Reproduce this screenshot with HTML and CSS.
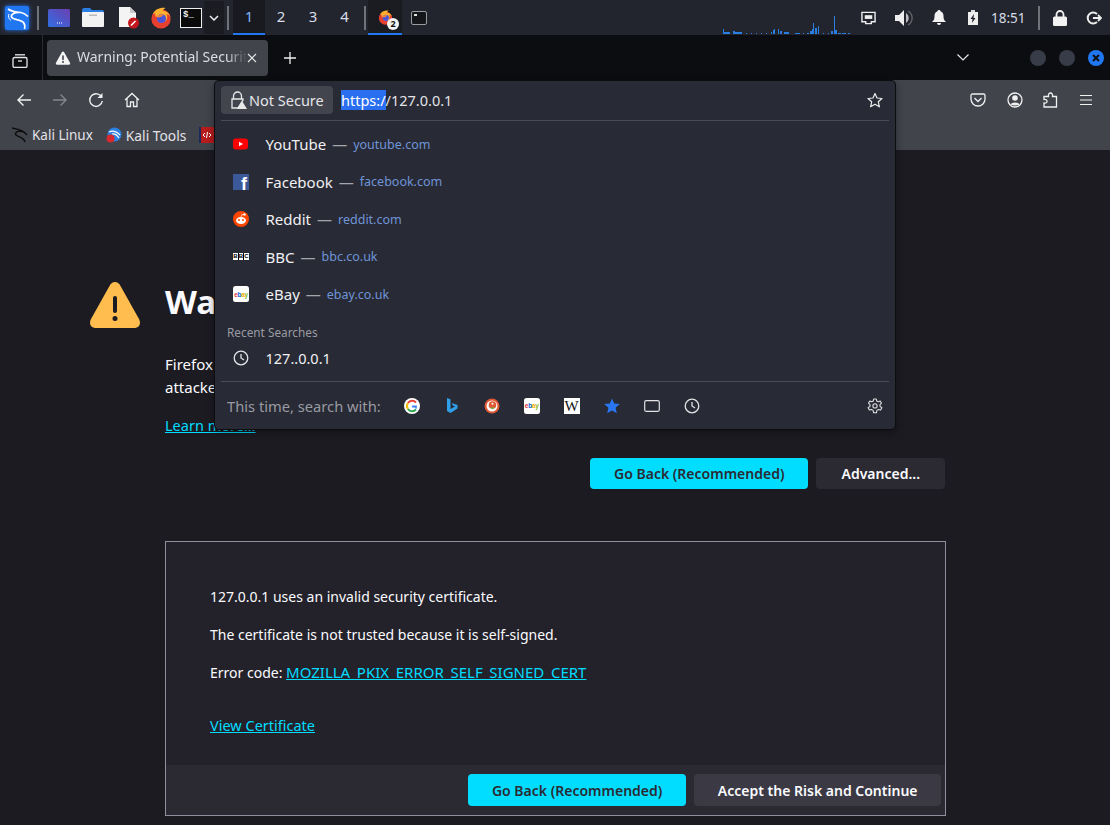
FILE: index.html
```html
<!DOCTYPE html>
<html lang="en">
<head>
  <meta charset="UTF-8" />
  <title>Warning: Potential Security Risk Ahead</title>
  <link rel="stylesheet" href="styles.css">
</head>
<body>
<svg class="sprite" width="0" height="0">
  <symbol id="firefox" viewBox="0 0 24 24">
    <circle cx="12" cy="13" r="10.5" fill="#e8402f"/>
    <path d="M3 8 C5 2 12 0 17 1 C15 2 14 3 14 4 C19 4 23 9 23 14 C23 10 20 8 18 8 C20 12 18 17 13 17 C9 17 7 14 8 11 C6 11 5 9 6 7 C5 7 4 7 3 8Z" fill="#ffb02e"/>
    <circle cx="12.5" cy="12.5" r="5" fill="#4b54d8"/>
    <path d="M7.5 11 C9 8 13 7 16 9 C13 8.5 12 10 13 11 C10 11 9 12 7.5 11Z" fill="#ff8a2b"/>
  </symbol>
  <symbol id="clock" viewBox="0 0 16 16">
    <circle cx="8" cy="8" r="6.8" fill="none" stroke="currentColor" stroke-width="1.3"/>
    <path d="M8 4 V8 L11 10" fill="none" stroke="currentColor" stroke-width="1.3"/>
  </symbol>
  <symbol id="warn" viewBox="0 0 16 16">
    <path d="M8 1.5 C8.6 1.5 9 1.8 9.3 2.4 L15 12.8 C15.5 13.8 15 14.7 13.9 14.7 H2.1 C1 14.7 .5 13.8 1 12.8 L6.7 2.4 C7 1.8 7.4 1.5 8 1.5Z" fill="currentColor"/>
    <rect x="7.2" y="5.2" width="1.6" height="5" rx=".8" fill="#42444c"/>
    <circle cx="8" cy="12.1" r="1" fill="#42444c"/>
  </symbol>
</svg>

<!-- desktop panel -->
<div class="panel">
  <div class="launcher">
    <svg class="kali-btn" viewBox="0 0 24 24" width="24" height="24">
      <rect width="24" height="24" rx="2" fill="#2177f2"/>
      <path d="M3 3 C7 6 12 6 16 6.500 C19 7 21 8.500 23 10.500 M16 6.500 C10 6 5.500 8 6.500 11 C7.500 14 15.500 13 18.500 16.500 C20 18.500 20 21 19.500 23" fill="none" stroke="#fff" stroke-width="1.700"/>
      <path d="M4 8 C3 10 3.500 13 6 14.500" fill="none" stroke="#fff" stroke-width="1"/>
    </svg>
    <span class="sep"></span>
    <svg class="app" viewBox="0 0 22 18" width="22" height="18"><defs><linearGradient id="win" x1="0" x2="1" y1="1" y2="0"><stop offset="0" stop-color="#2f6fe4"/><stop offset="1" stop-color="#6c3fb0"/></linearGradient></defs><rect width="22" height="18" rx="1.500" fill="url(#win)"/><rect x="9" y="13.500" width="1" height="1" fill="#fff"/><rect x="11" y="13.500" width="1" height="1" fill="#fff"/><rect x="13" y="13.500" width="1" height="1" fill="#fff"/></svg>
    <svg class="app" viewBox="0 0 22 19" width="22" height="19"><path d="M0 2 Q0 0 2 0 H8 L10 2 H20 Q22 2 22 4 V8 H0Z" fill="#2c7de0"/><rect y="4" width="22" height="15" rx="1" fill="#f2f2f2"/><rect x="7" y="6.500" width="8" height="1.500" fill="#bbb"/></svg>
    <svg class="app app-doc" viewBox="0 0 22 22" width="22" height="22"><path d="M1 0 H12 L18 6 V20 H1Z" fill="#f4f4f4"/><path d="M12 0 L18 6 H12Z" fill="#c8c8c8"/><circle cx="15.500" cy="16" r="5.500" fill="#c4161c"/><path d="M13 18.500 L17.500 14" stroke="#fff" stroke-width="1.600"/></svg>
    <svg class="app" viewBox="0 0 24 24" width="22" height="22"><use href="#firefox"/></svg>
    <div class="term-app"><span>$_</span></div>
    <div class="chev-app"><svg viewBox="0 0 10 6" width="10" height="6"><path d="M1 1 L5 5 L9 1" fill="none" stroke="#eee" stroke-width="1.500"/></svg></div>
    <span class="sep sep-wide"></span>
  </div>
  <div class="desks">
    <span class="desk on">1</span>
    <span class="desk">2</span>
    <span class="desk">3</span>
    <span class="desk">4</span>
  </div>
  <span class="sep sep-b"></span>
  <div class="task on">
    <svg viewBox="0 0 24 24" width="15" height="15"><use href="#firefox"/></svg>
    <span class="task-badge">2</span>
  </div>
  <div class="task-term"><span></span></div>
  <div class="cpu">
    <svg viewBox="0 0 130 20" width="130" height="20">
      <path d="M0 15 h1 v5 h-1z M1 18 h6 v2 h-6z M10 17 h2 v3 h-2z M12 18 h7 v2 h-7z M23 19 h1 v1 h-1z M28 19 h1 v1 h-1z M33 19 h1 v1 h-1z M38 19 h1 v1 h-1z M43 19 h1 v1 h-1z M48 18 h1 v2 h-1z M50 16 h1 v4 h-1z M51 15 h1 v5 h-1z M55 15 h1 v5 h-1z M57 17 h2 v3 h-2z M61 18 h5 v2 h-5z M72 19 h5 v1 h-5z M80 19 h1 v1 h-1z M84 19 h2 v1 h-2z M87 17 h2 v3 h-2z M89 15 h1 v5 h-1z M90 9 h1 v11 h-1z M92 14 h2 v6 h-2z M95 12 h1 v8 h-1z M100 19 h1 v1 h-1z M105 19 h1 v1 h-1z M108 17 h2 v3 h-2z M111 2 h1 v18 h-1z M112 16 h2 v4 h-2z M115 19 h3 v1 h-3z M119 19 h4 v1 h-4z M125 19 h2 v1 h-2z" fill="#2a7de1"/>
    </svg>
  </div>
  <div class="tray">
    <svg viewBox="0 0 16 14" width="15" height="14"><path d="M1 1 H15 V11 H11 V13 H5 V11 H1Z" fill="none" stroke="#eee" stroke-width="1.500"/><path d="M4 4 H12 V8 H4Z" fill="#eee"/></svg>
    <svg viewBox="0 0 18 16" width="18" height="16"><path d="M0 5 H4 L9 0 V16 L4 11 H0Z" fill="#eee"/><path d="M11 3 A6 6 0 0 1 11 13Z" fill="#bbb"/><path d="M13 1 A8 8 0 0 1 13 15" fill="none" stroke="#666" stroke-width="1.300"/></svg>
    <svg viewBox="0 0 14 15" width="14" height="15"><path d="M7 0 C8 0 8.500 .6 8.500 1.300 C10.500 2 11.500 3.500 11.500 6 C11.500 9 12 10.500 14 12 H0 C2 10.500 2.500 9 2.500 6 C2.500 3.500 3.500 2 5.500 1.300 C5.500 .6 6 0 7 0Z" fill="#f2f2f2"/><path d="M5 13 H9 A2 2 0 0 1 5 13Z" fill="#f2f2f2"/></svg>
    <svg class="battery" viewBox="0 0 10 15" width="10" height="15"><rect x="3" y="0" width="4" height="2" fill="#ddd"/><rect y="2" width="10" height="13" fill="#eee"/><path d="M6 4 L2.500 9 H4.500 L4 13 L7.500 8 H5.500Z" fill="#23252e"/></svg>
    <span class="clock-text">18:51</span>
    <span class="sep"></span>
    <svg viewBox="0 0 14 16" width="14" height="16"><path d="M3.500 7 V4.500 A3.500 3.500 0 0 1 10.500 4.500 V7" fill="none" stroke="#f2f2f2" stroke-width="1.800"/><rect y="6.500" width="14" height="9.500" rx="1.500" fill="#f2f2f2"/></svg>
    <svg viewBox="0 0 16 14" width="16" height="14"><path d="M11 3 A5.500 5.500 0 1 0 11 11" fill="none" stroke="#eee" stroke-width="2"/><path d="M7 7 H15 M12 4 L15 7 L12 10" fill="none" stroke="#eee" stroke-width="1.800"/></svg>
  </div>
</div>

<!-- firefox tabs -->
<div class="tabbar">
  <div class="view-btn">
    <svg viewBox="0 0 16 14" width="16" height="14"><rect x="1" y="3.500" width="14" height="10" rx="1.500" fill="none" stroke="#e8e8e8" stroke-width="1.300"/><path d="M3 .8 H13" stroke="#e8e8e8" stroke-width="1.300"/><path d="M6 7 H10" stroke="#e8e8e8" stroke-width="1.300"/></svg>
  </div>
  <div class="tab">
    <svg class="tab-warn" viewBox="0 0 16 16" width="16" height="16"><use href="#warn"/></svg>
    <span class="tab-title">Warning: Potential Security Risk Ahead</span>
    <svg viewBox="0 0 10 10" width="10" height="10"><path d="M1 1 L9 9 M9 1 L1 9" stroke="#e8e8e8" stroke-width="1.100"/></svg>
  </div>
  <svg class="new-tab" viewBox="0 0 12 12" width="12" height="12"><path d="M6 0 V12 M0 6 H12" stroke="#f0f0f0" stroke-width="1.300"/></svg>
  <svg class="tab-list" viewBox="0 0 12 7" width="12" height="7"><path d="M.5 .5 L6 6 L11.500 .5" fill="none" stroke="#e8e8e8" stroke-width="1.200"/></svg>
  <span class="win-btn"></span>
  <span class="win-btn"></span>
  <span class="win-btn close"><svg viewBox="0 0 8 8" width="8" height="8"><path d="M1 1 L7 7 M7 1 L1 7" stroke="#101014" stroke-width="2"/></svg></span>
</div>

<!-- toolbar and bookmarks -->
<div class="toolbar">
  <div class="nav-row">
    <svg viewBox="0 0 16 14" width="16" height="14"><path d="M15 7 H2 M7.500 1.500 L2 7 L7.500 12.500" fill="none" stroke="#f0f0f0" stroke-width="1.400"/></svg>
    <svg class="dim" viewBox="0 0 16 14" width="16" height="14"><path d="M1 7 H14 M8.500 1.500 L14 7 L8.500 12.500" fill="none" stroke="#85868c" stroke-width="1.400"/></svg>
    <svg viewBox="0 0 16 16" width="16" height="16"><path d="M13.800 5.500 A6.300 6.300 0 1 0 14.300 9" fill="none" stroke="#f0f0f0" stroke-width="1.400"/><path d="M14.500 1 V6 H9.500Z" fill="#f0f0f0"/></svg>
    <svg viewBox="0 0 16 16" width="16" height="16"><path d="M1 8 L8 1.500 L15 8 M3 6.500 V14.500 H6.500 V10 H9.500 V14.500 H13 V6.500" fill="none" stroke="#f0f0f0" stroke-width="1.300"/></svg>
    <div class="nav-right">
      <svg viewBox="0 0 16 14" width="16" height="14"><path d="M1 2.500 Q1 1 2.500 1 H13.500 Q15 1 15 2.500 V6 A7 7 0 0 1 1 6Z" fill="none" stroke="#f0f0f0" stroke-width="1.300"/><path d="M4.500 5 L8 8.500 L11.500 5" fill="none" stroke="#f0f0f0" stroke-width="1.300"/></svg>
      <svg viewBox="0 0 16 16" width="16" height="16"><circle cx="8" cy="8" r="7" fill="none" stroke="#f0f0f0" stroke-width="1.300"/><circle cx="8" cy="6" r="2.800" fill="#f0f0f0"/><path d="M3.500 12.500 C4.500 9.800 11.500 9.800 12.500 12.500 Q8 14.500 3.500 12.500Z" fill="#f0f0f0"/></svg>
      <svg viewBox="0 0 16 16" width="16" height="16"><path d="M1 15 V11 C3 11.500 4 10.500 4 9.300 C4 8 3 7.200 1 7.500 V4.500 H5.500 C5 2.500 6 1 7.500 1 C9 1 10 2.500 9.500 4.500 H13.500 V15Z" fill="none" stroke="#f0f0f0" stroke-width="1.300"/></svg>
      <svg viewBox="0 0 14 12" width="14" height="12"><path d="M1 1.500 H13 M1 6 H13 M1 10.500 H13" stroke="#f0f0f0" stroke-width="1.200"/></svg>
    </div>
  </div>
  <div class="bookmarks">
    <span class="mark"><svg viewBox="0 0 16 16" width="16" height="16"><path d="M0 1 C5 2 9 3 12 5 L15 8 M12 5 C7 3 2 5 4 8 C6 10 12 10 13 15" fill="none" stroke="#0c0c0c" stroke-width="1.500"/></svg>Kali Linux</span>
    <span class="mark mark-tools"><svg viewBox="0 0 16 16" width="16" height="16"><circle cx="8.500" cy="7.500" r="7" fill="#2d7fe0"/><path d="M3 5 C7 3 11 5 14 8 M6 7 C9 6 11 8 13 11" fill="none" stroke="#fff" stroke-width="1.200"/><circle cx="4.500" cy="11.500" r="4" fill="#d6282d"/></svg>Kali Tools</span>
    <span class="mark"><svg viewBox="0 0 16 16" width="16" height="16"><rect width="16" height="16" fill="#b71c1c"/><rect width="2" height="16" fill="#1a2a5a"/><path d="M6 6 L4 8 L6 10 M8.500 5 L7.500 11 M10 6 L12 8 L10 10" fill="none" stroke="#fff" stroke-width="1"/></svg>Kali Docs</span>
  </div>
</div>

<!-- error page -->
<main class="page">
  <div class="intro">
    <svg class="big-warn" viewBox="0 0 52 48" width="52" height="48">
      <path d="M26 1 C28.500 1 30 2.500 31.500 5 L50 38 C52.500 43 50 47 45 47 H7 C2 47 -.5 43 2 38 L20.500 5 C22 2.500 23.500 1 26 1Z" fill="#ffbd4f"/>
      <rect x="24" y="15" width="4" height="17" rx="2" fill="#1c1b22"/>
      <circle cx="26" cy="37.500" r="2.500" fill="#1c1b22"/>
    </svg>
    <div class="intro-text">
      <h1>Warning: Potential Security Risk Ahead</h1>
      <p>Firefox detected a potential security threat and did not continue to 127.0.0.1. If you visit this site, attackers could try to steal information like your passwords, emails, or credit card details.</p>
      <a class="link" href="#">Learn more...</a>
      <div class="actions">
        <button class="btn primary">Go Back (Recommended)</button>
        <button class="btn plain">Advanced...</button>
      </div>
    </div>
  </div>
  <section class="details">
    <div class="details-body">
      <p>127.0.0.1 uses an invalid security certificate.</p>
      <p>The certificate is not trusted because it is self-signed.</p>
      <p>Error code: <a class="link" href="#">MOZILLA_PKIX_ERROR_SELF_SIGNED_CERT</a></p>
      <a class="link view-cert" href="#">View Certificate</a>
    </div>
    <div class="details-foot">
      <button class="btn primary">Go Back (Recommended)</button>
      <button class="btn plain">Accept the Risk and Continue</button>
    </div>
  </section>
</main>

<!-- address bar dropdown -->
<div class="urlbar">
  <div class="url-input">
    <div class="not-secure">
      <svg viewBox="0 0 18 18" width="18" height="18"><path d="M4.500 8 V5 A4 4 0 0 1 12.500 5 V8" fill="none" stroke="#e8e8e8" stroke-width="1.300"/><path d="M3 8 H14 V9 L9 17 H3Z" fill="none" stroke="#e8e8e8" stroke-width="1.300"/><path d="M13 10 L18 18 H8Z" fill="#e8e8e8"/></svg>
      Not Secure
    </div>
    <span class="url-text"><span class="selected">https:/</span>/127.0.0.1</span>
    <svg class="star" viewBox="0 0 16 16" width="16" height="16"><path d="M8 1.500 L10 6 L15 6.500 L11.300 9.800 L12.400 14.800 L8 12.200 L3.600 14.800 L4.700 9.800 L1 6.500 L6 6Z" fill="none" stroke="#eee" stroke-width="1.200" stroke-linejoin="round"/></svg>
  </div>
  <ul class="results">
    <li class="row">
      <svg viewBox="0 0 16 16" width="16" height="16"><rect y="2.500" width="15" height="11" rx="3" fill="#f00"/><path d="M6 5.800 L10 8 L6 10.200Z" fill="#fff"/></svg>
      <span class="row-title">YouTube</span><span class="dash">—</span><span class="row-url">youtube.com</span>
    </li>
    <li class="row">
      <span class="fb-icon">f</span>
      <span class="row-title">Facebook</span><span class="dash">—</span><span class="row-url">facebook.com</span>
    </li>
    <li class="row">
      <svg viewBox="0 0 16 16" width="16" height="16"><circle cx="8" cy="8" r="8" fill="#ff4500"/><ellipse cx="8" cy="9.500" rx="5" ry="3.500" fill="#fff"/><circle cx="6" cy="9" r="1" fill="#ff4500"/><circle cx="10" cy="9" r="1" fill="#ff4500"/><circle cx="11.500" cy="3.500" r="1.200" fill="#fff"/><path d="M8 6 L9 3.500 L11 3.500" fill="none" stroke="#fff" stroke-width=".7"/></svg>
      <span class="row-title">Reddit</span><span class="dash">—</span><span class="row-url">reddit.com</span>
    </li>
    <li class="row">
      <span class="bbc-icon"><b>B</b><b>B</b><b>C</b></span>
      <span class="row-title">BBC</span><span class="dash">—</span><span class="row-url">bbc.co.uk</span>
    </li>
    <li class="row">
      <span class="ebay-icon"><i class="e1">e</i><i class="e2">b</i><i class="e3">a</i><i class="e4">y</i></span>
      <span class="row-title">eBay</span><span class="dash">—</span><span class="row-url">ebay.co.uk</span>
    </li>
  </ul>
  <div class="recent-label">Recent Searches</div>
  <div class="row recent-row">
    <svg viewBox="0 0 16 16" width="16" height="16"><use href="#clock"/></svg>
    <span class="row-title">127..0.0.1</span>
  </div>
  <div class="oneoff">
    <span class="oneoff-label">This time, search with:</span>
    <div class="engines">
      <svg viewBox="0 0 16 16" width="16" height="16"><circle cx="8" cy="8" r="8" fill="#fff"/><path d="M12 4.500 A5 5 0 0 0 4 5" fill="none" stroke="#ea4335" stroke-width="2"/><path d="M4 5 A5 5 0 0 0 4 11" fill="none" stroke="#fbbc05" stroke-width="2"/><path d="M4 11 A5 5 0 0 0 12 11.500" fill="none" stroke="#34a853" stroke-width="2"/><path d="M12 11.500 Q13 10 13 7.500 H8 V9.500 H11" fill="#4285f4"/></svg>
      <svg viewBox="0 0 16 16" width="16" height="16"><path d="M3 0 L6.500 1.300 V11 L11 8.500 L8.800 7.500 L7.800 5 L13.500 7 V10.500 L6.500 15 L3 13Z" fill="#2f9fe8"/></svg>
      <svg viewBox="0 0 16 16" width="16" height="16"><circle cx="8" cy="8" r="7.500" fill="#de5833"/><circle cx="8" cy="8" r="5.500" fill="#fff"/><circle cx="8.500" cy="7" r="3.800" fill="#de5833"/><path d="M6.500 9.500 H11 L8.500 11.500Z" fill="#65bc46"/><circle cx="8.500" cy="5.800" r="1" fill="#fff"/></svg>
      <span class="ebay-icon"><i class="e1">e</i><i class="e2">b</i><i class="e3">a</i><i class="e4">y</i></span>
      <span class="wiki-icon">W</span>
      <svg viewBox="0 0 16 16" width="16" height="16"><path d="M8 .5 L10.200 5.500 L15.800 6.100 L11.600 9.800 L12.800 15.300 L8 12.500 L3.200 15.300 L4.400 9.800 L.2 6.100 L5.800 5.500Z" fill="#2a76f0"/></svg>
      <svg viewBox="0 0 16 16" width="16" height="16"><rect x=".7" y="2.700" width="14.600" height="10.600" rx="1.500" fill="none" stroke="#e2e2e4" stroke-width="1.200"/></svg>
      <svg viewBox="0 0 16 16" width="16" height="16"><use href="#clock"/></svg>
    </div>
    <svg class="gear" viewBox="0 0 16 16" width="16" height="16"><path d="M6.700 1 H9.300 L9.700 3 L11.300 3.800 L13.200 3 L14.500 5.200 L13 6.600 V8.400 L14.900 9.800 L13.600 12.100 L11.500 11.400 L9.900 12.400 L9.400 14.800 H6.600 L6.100 12.400 L4.500 11.400 L2.400 12.100 L1.100 9.800 L3 8.400 V6.600 L1.500 5.200 L2.800 3 L4.700 3.800 L6.300 3Z" fill="none" stroke="#e2e2e4" stroke-width="1.100" stroke-linejoin="round"/><circle cx="8" cy="7.900" r="2.100" fill="none" stroke="#e2e2e4" stroke-width="1.100"/></svg>
  </div>
</div>
</body>
</html>
```

FILE: styles.css
```css
* {
  box-sizing: border-box;
}
html, body {
  margin: 0;
  height: 825px;
  overflow: hidden;
}
body {
  position: relative;
  display: flex;
  flex-direction: column;
  font-family: "Noto Sans", sans-serif;
  font-size: 15px;
  color: #fbfbfe;
  background: #1c1b22;
}
.sprite {
  position: absolute;
}

/* panel */
.panel {
  flex: none;
  height: 35px;
  display: flex;
  align-items: center;
  background: #23252e;
  color: #dfe3ea;
}
.launcher {
  display: flex;
  align-items: center;
  height: 35px;
  padding-left: 5px;
}
.kali-btn {
  filter: drop-shadow(0 0 2px #2177f2);
}
.sep {
  width: 2px;
  height: 24px;
  background: #6f7278;
  margin: 0 9px 0 8px;
}
.app {
  margin-right: 12px;
}
.app-doc {
  margin-left: 2px;
  margin-right: 10px;
}
.term-app {
  width: 22px;
  height: 20px;
  margin-left: -4px;
  border: 1px solid #eee;
  background: #0a0a0a;
  color: #eee;
  font-family: "Liberation Mono", monospace;
  font-size: 9px;
  font-weight: bold;
  line-height: 12px;
  padding-left: 2px;
}
.chev-app {
  width: 20px;
  height: 33px;
  margin-left: 2px;
  background: #1b1c22;
  display: flex;
  align-items: center;
  justify-content: center;
}
.sep-wide {
  margin: 0 4px 0 3px;
}
.desks {
  display: flex;
  height: 35px;
}
.desk {
  width: 32px;
  line-height: 32px;
  text-align: center;
  font-size: 15px;
  color: #d8dde5;
}
.desk:nth-child(4) {
  width: 31px;
}
.desk.on {
  background: #191a20;
  color: #7fb2f4;
  border-bottom: 2px solid #2177f2;
}
.sep-b {
  margin: 0 2px 0 4px;
}
.task {
  position: relative;
  width: 34px;
  height: 35px;
  background: #1b1c22;
  padding: 9px 0 0 10px;
}
.task.on {
  border-bottom: 2px solid #2177f2;
}
.task-badge {
  position: absolute;
  left: 19px;
  top: 18px;
  width: 12px;
  height: 12px;
  border-radius: 50%;
  background: #f2f2f2;
  color: #111;
  font-size: 9px;
  font-weight: bold;
  line-height: 12px;
  text-align: center;
}
.task-term {
  width: 16px;
  height: 14px;
  margin-left: 9px;
  background: #15161a;
  border: 1px solid #9a9ca0;
  border-radius: 2px;
}
.task-term span {
  display: block;
  width: 3px;
  height: 2px;
  margin: 2px 0 0 2px;
  background: #ddd;
}
.cpu {
  display: flex;
  align-items: flex-end;
  width: 130px;
  height: 35px;
  margin-left: 296px;
  padding-bottom: 1px;
}
.tray {
  display: flex;
  align-items: center;
  margin-left: 8px;
  gap: 19px;
}
.battery {
  margin-left: 3px;
}
.clock-text {
  font-size: 13.500px;
  color: #d5dbe3;
  margin-left: -6px;
}
.tray .sep {
  margin: 0 -6px 0 -7px;
}

/* tab strip */
.tabbar {
  flex: none;
  height: 45px;
  display: flex;
  align-items: center;
  background: #0c0d10;
}
.view-btn {
  width: 43px;
  height: 45px;
  padding: 17px 0 0 12px;
  border-right: 1px solid #2a2b30;
}
.tab {
  width: 221px;
  height: 36px;
  margin-left: 4px;
  padding: 0 11px 0 8px;
  display: flex;
  align-items: center;
  border-radius: 4px;
  background: #42444c;
  color: #fbfbfe;
}
.tab-warn {
  flex: none;
  color: #f4f4f5;
}
.tab-title {
  flex: 1;
  min-width: 0;
  margin: -2px 0 0 6px;
  white-space: nowrap;
  overflow: hidden;
  font-size: 14px;
  color: #dcdce0;
  -webkit-mask-image: linear-gradient(to right, #000 88%, transparent 100%);
  mask-image: linear-gradient(to right, #000 88%, transparent 100%);
}
.new-tab {
  margin-left: 16px;
}
.tab-list {
  margin-left: auto;
  margin-right: 61px;
}
.win-btn {
  width: 16px;
  height: 16px;
  margin-right: 13px;
  border-radius: 50%;
  background: #373c48;
  display: flex;
  align-items: center;
  justify-content: center;
}
.win-btn.close {
  background: #2177f2;
  margin-right: 6px;
}

/* toolbar */
.toolbar {
  flex: none;
  height: 70px;
  background: #42444c;
}
.nav-row {
  height: 40px;
  display: flex;
  align-items: center;
  gap: 20px;
  padding: 0 17px 0 16px;
}
.nav-right {
  margin-left: auto;
  display: flex;
  align-items: center;
  gap: 20px;
}
.nav-right svg:first-child {
  margin-right: 1px;
}
.bookmarks {
  display: flex;
  gap: 13px;
  padding-left: 12px;
  height: 30px;
  align-items: center;
}
.mark {
  display: flex;
  align-items: center;
  gap: 4px;
  font-size: 13.500px;
  color: #e2e2e6;
}
.mark svg {
  flex: none;
}
.mark-tools {
  font-size: 13.800px;
}

/* error page */
.page {
  flex: 1;
  padding-top: 131px;
  color: #fbfbfe;
}
.intro {
  display: flex;
  padding-left: 89px;
}
.big-warn {
  flex: none;
}
.intro-text {
  width: 780px;
  margin-left: 24px;
}
h1 {
  margin: -3px 0 0;
  font-size: 33px;
  font-weight: bold;
  line-height: 48px;
  white-space: nowrap;
}
.intro-text p {
  margin: 27px 0 0;
  width: 720px;
  line-height: 23px;
}
.link {
  color: #00ddff;
  font-size: 15px;
}
.intro-text .link {
  display: inline-block;
  margin-top: 16px;
  font-size: 14.500px;
}
.actions {
  display: flex;
  justify-content: flex-end;
  gap: 8px;
  margin-top: 23px;
}
.btn {
  height: 31px;
  padding: 0 24px;
  border: none;
  border-radius: 4px;
  font-family: "Noto Sans", sans-serif;
  font-size: 14px;
  font-weight: 600;
}
.btn.primary {
  background: #00ddff;
  color: #2b2a33;
}
.btn.plain {
  background: #2b2a33;
  color: #fbfbfe;
}
.actions .btn.plain {
  padding: 0 25px;
}
.details {
  width: 781px;
  height: 275px;
  margin: 52px 0 0 165px;
  border: 1px solid #8f8f9d;
  background: #23222b;
  display: flex;
  flex-direction: column;
}
.details-body {
  flex: 1;
  padding: 45px 44px 0;
  font-size: 14px;
}
.details-body p {
  margin: 0 0 17.500px;
  line-height: 20.500px;
  font-size: 14px;
}
.details-body p:nth-child(2) {
  margin-bottom: 16px;
}
.details-body .link {
  font-size: 15px;
}
.details-body .view-cert {
  display: inline-block;
  margin-top: 14px;
  font-size: 14.500px;
}
.details-foot {
  height: 50px;
  background: #2b2a33;
  display: flex;
  justify-content: flex-end;
  gap: 8px;
  padding: 9px 4px 0 0;
}
.details-foot .btn {
  height: 32px;
}
.details-foot .btn.plain {
  background: #3a3944;
  padding: 0 23.500px;
}

/* urlbar */
.urlbar {
  position: absolute;
  left: 215px;
  top: 81px;
  width: 680px;
  height: 348px;
  background: #282a35;
  border-radius: 4px;
  box-shadow: 0 0 0 1px #0c0d10, 0 2px 8px rgba(0,0,0,.5);
  padding: 0 6px;
}
.url-input {
  display: flex;
  align-items: center;
  height: 40px;
  padding-top: 3px;
  border-bottom: 1px solid #4a4b54;
}
.not-secure {
  display: flex;
  align-items: center;
  gap: 2px;
  width: 112px;
  height: 28px;
  padding-left: 8px;
  margin-top: -4px;
  border-radius: 4px;
  background: #42444e;
  font-size: 14.500px;
  color: #e4e4e8;
  white-space: nowrap;
}
.url-text {
  margin: -4px 0 0 8px;
  font-size: 14.500px;
  color: #e4e4e8;
}
.selected {
  background: #2a6ff0;
  color: #fff;
  display: inline-block;
  line-height: 20px;
}
.star {
  margin: -4px 6px 0 auto;
}
.results {
  list-style: none;
  margin: 0;
  padding: 4.500px 0 0;
}
.row {
  display: flex;
  align-items: center;
  height: 37.500px;
  padding-left: 12px;
}
.row > svg, .fb-icon, .bbc-icon {
  flex: none;
  width: 16px;
}
.row-title {
  margin-left: 16.500px;
  font-size: 15px;
  color: #f0f0f3;
}
.dash {
  margin: 0 6px;
  color: #a5a6ad;
}
.row-url {
  font-size: 12.500px;
  color: #6f95d8;
}
.fb-icon {
  height: 16px;
  background: #3b5998;
  color: #fff;
  font-family: "Liberation Sans", sans-serif;
  font-size: 18px;
  font-weight: bold;
  line-height: 20px;
  text-align: right;
  padding-right: 2px;
  overflow: hidden;
}
.bbc-icon {
  display: flex;
  gap: 1px;
  height: 7px;
  background: #000;
}
.bbc-icon b {
  width: 4.600px;
  height: 7px;
  background: #fff;
  color: #000;
  font-family: "Liberation Sans", sans-serif;
  font-size: 6px;
  line-height: 7px;
  text-align: center;
}
.ebay-icon {
  flex: none;
  width: 16px;
  height: 16px;
  border-radius: 2.500px;
  background: #fff;
  display: flex;
  align-items: center;
  justify-content: center;
  font-family: "Liberation Sans", sans-serif;
  font-size: 6.500px;
  font-weight: bold;
  letter-spacing: -.3px;
}
.ebay-icon i {
  font-style: normal;
}
.e1 {
  color: #e53238;
}
.e2 {
  color: #0064d2;
}
.e3 {
  color: #f5af02;
}
.e4 {
  color: #86b817;
}
.recent-label {
  margin-top: 10.500px;
  padding-left: 6px;
  line-height: 17px;
  font-size: 11.800px;
  color: #9a9ba2;
}
.recent-row {
  height: 35px;
}
.recent-row svg {
  color: #e4e4e8;
}
.recent-row .row-title {
  font-size: 14.500px;
}
.oneoff {
  display: flex;
  align-items: center;
  height: 49px;
  margin-top: 5px;
  border-top: 1px solid #4a4b54;
}
.oneoff-label {
  padding-left: 6px;
  font-size: 14.700px;
  color: #9a9ba2;
}
.engines {
  display: flex;
  align-items: center;
  gap: 24px;
  margin-left: 23px;
  color: #e2e2e4;
}
.wiki-icon {
  width: 16px;
  height: 16px;
  background: #fff;
  color: #111;
  font-family: "Liberation Serif", serif;
  font-size: 15px;
  line-height: 16px;
  text-align: center;
}
.gear {
  margin: 0 6px 0 auto;
}
```
